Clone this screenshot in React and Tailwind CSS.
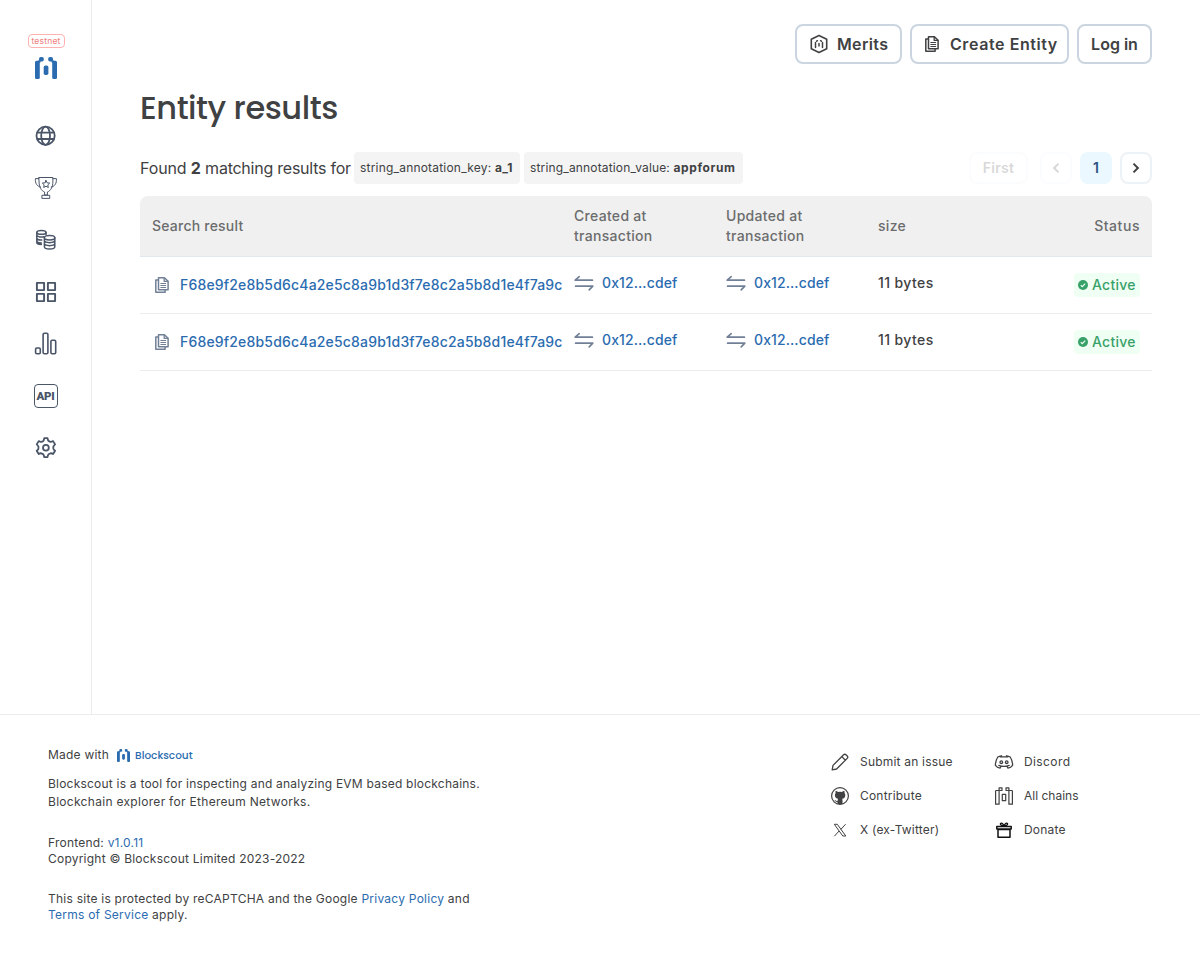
import React from "react";

const svgBase = { fill: "none", stroke: "currentColor", strokeLinecap: "round", strokeLinejoin: "round" };

function Logo({ className }) {
  return (
    <svg viewBox="0 0 22 22" className={className} fill="currentColor">
      <rect x="0" y="3.8" width="4.8" height="18.2" rx="1.5" />
      <rect x="17.2" y="3.8" width="4.8" height="18.2" rx="1.5" />
      <rect x="4" y="0" width="4.8" height="4.6" rx="1.8" />
      <rect x="13.2" y="0" width="4.8" height="4.6" rx="1.8" />
      <rect x="3" y="3.4" width="2.6" height="2" />
      <rect x="16.4" y="3.4" width="2.6" height="2" />
      <rect x="8.7" y="8.4" width="4.7" height="9.6" rx="1.8" />
    </svg>
  );
}

function GlobeIcon() {
  return (
    <svg viewBox="0 0 30 30" className="size-[30px]" {...svgBase} strokeWidth="1.8">
      <circle cx="14.6" cy="14.8" r="9.1" />
      <ellipse cx="14.6" cy="14.8" rx="4.4" ry="9.1" />
      <path d="M6.6 11.6h16M6.6 18h16" />
    </svg>
  );
}

function TrophyIcon() {
  return (
    <svg viewBox="0 0 30 30" className="size-[30px]" {...svgBase} strokeWidth="1">
      <path d="M8 4.500h13.900v3.800c0 6-2.300 9.500-5.500 10.700v3h-2.800v-3c-3.200-1.200-5.600-4.700-5.600-10.700z" />
      <path d="M8 5.600H4.400c-.3 5 1.600 7.700 5.200 8.500M22 5.600h3.400c.3 5-1.600 7.700-5.200 8.500" />
      <path d="M11.300 22.300h7.400v3.100h-7.400z" />
      <path d="m15 7.400 1.100 2.400 2.600.3-1.900 1.800.5 2.600-2.300-1.300-2.300 1.300.5-2.600-1.900-1.800 2.600-.3z" />
    </svg>
  );
}

function CoinsIcon() {
  return (
    <svg viewBox="0 0 30 30" className="size-[30px]" {...svgBase} strokeWidth="1.5">
      <ellipse cx="10.400" cy="7.400" rx="4.600" ry="1.900" />
      <path d="M5.800 7.400v10.200c0 1.200 2.100 1.900 4.500 1.900M15 7.400v2.200M5.800 10.300c.6 1.700 5 2.200 7.200 1.400M5.800 13.400c.6 1.500 2.800 1.800 5 1.700M5.800 16.400c.6 1 2.500 1.600 4.600 1.600" />
      <ellipse cx="18.600" cy="12.700" rx="5.200" ry="2.200" />
      <path d="M13.400 12.700v9c0 3 10.400 3 10.400 0v-9M13.400 15.700c.6 2.600 9.800 2.600 10.400 0M13.400 18.700c.6 2.600 9.800 2.600 10.400 0" />
    </svg>
  );
}

function GridIcon() {
  return (
    <svg viewBox="0 0 30 30" className="size-[30px]" fill="none" stroke="currentColor" strokeWidth="1.9" strokeLinejoin="round">
      <path d="M5.900 5.900h7.200v7.200H5.900zM16.900 5.900h7.200v7.200h-7.200zM5.900 16.900h7.200v7.200H5.900zM16.900 16.900h7.200v7.200h-7.200z" />
    </svg>
  );
}

function StatsIcon() {
  return (
    <svg viewBox="0 0 30 30" className="size-[30px]" {...svgBase} strokeWidth="1.600">
      <rect x="4.600" y="19" width="4.700" height="5.800" rx="1.200" />
      <rect x="12.100" y="4.200" width="4.800" height="20.600" rx="1.200" />
      <rect x="19.900" y="11.200" width="4.800" height="13.600" rx="1.200" />
    </svg>
  );
}

function ApiIcon() {
  return (
    <span className="flex h-6 w-6 items-center justify-center rounded-[4px] border-[1.5px] border-[#4a5568] pt-px font-[Roboto,sans-serif] text-[11.5px] font-black leading-none tracking-[-0.3px]">
      API
    </span>
  );
}

function GearIcon() {
  return (
    <svg viewBox="0 0 30 30" className="size-[30px]" {...svgBase} strokeWidth="1.800">
      <circle cx="14.900" cy="14.700" r="2.900" />
      <path d="M13.300 5.200h3.200q.5 2.300 1.100 2.800t1.900.9q1 .2 2.600-.8l2 3.300q-1.500 1.400-1.700 2.100t0 2.200q.2.900 1.700 2l-2 3.300q-1.600-1-2.600-.7t-1.900 1q-.7.500-1.100 2.900h-3.200q-.5-2.400-1.100-2.900t-1.900-1q-1-.3-2.600.7l-2-3.300q1.500-1.100 1.700-2t0-2.200q-.2-.7-1.700-2.100l2-3.300q1.600 1 2.600.8t1.900-.9q.6-.5 1.100-2.800z" />
    </svg>
  );
}

function DocsIcon({ className }) {
  return (
    <svg viewBox="0 0 16 18" className={className} {...svgBase} strokeWidth="1.500">
      <path d="M4.500 1.700h5.900l3.700 3.600v8.500H4.500z" />
      <path d="M3.800 3.900H1.800v12.400h9.300v-2.200" />
      <path strokeWidth="1.300" d="M10.200 2v3.400h3.600" />
      <path strokeWidth="1" d="M6.800 7.500h4.900M6.800 9.500h4.900M6.800 11.500h4.900" />
    </svg>
  );
}

function MeritsIcon() {
  return (
    <svg viewBox="0 0 20 20" className="size-5 shrink-0" {...svgBase} strokeWidth="1.600">
      <path d="m10 1.500 7.700 3.700v9.600L10 18.500l-7.700-3.700V5.200z" />
      <path strokeWidth="1.500" d="M6.500 8.500v5M8.400 6.700l-.7.500M13.500 8.500v5M11.600 6.700l.7.500M10 9.600v2.400" />
    </svg>
  );
}

function TxIcon() {
  return (
    <svg viewBox="0 0 20 20" className="size-5 shrink-0 text-[#718096]" {...svgBase} strokeWidth="1.700">
      <path d="M18.400 7.200H1.200l4-3.500M1.600 13.200h17.200l-3.600 3.700" />
    </svg>
  );
}

function Chevron({ flip }) {
  return (
    <svg viewBox="0 0 12 12" className="size-3" fill="none" stroke="currentColor" strokeWidth="2">
      <path d={flip ? "M8.500 1.600 4.100 6l4.400 4.400" : "M3.500 1.600 7.900 6l-4.400 4.400"} />
    </svg>
  );
}

function CheckIcon() {
  return (
    <svg viewBox="0 0 10 10" className="size-[10px]">
      <circle cx="5" cy="5" r="5" fill="currentColor" />
      <path d="m2.800 5.200 1.500 1.400 2.900-3" fill="none" stroke="#f0fff4" strokeWidth="1.200" />
    </svg>
  );
}

const foot = { viewBox: "0 0 20 20", className: "size-5 shrink-0" };

const footerIcons = {
  edit: (
    <svg {...foot} {...svgBase} strokeWidth="1.300">
      <path d="M2.200 17.800 3 13.400 13.600 2.800a1.700 1.700 0 0 1 2.400 0l1.200 1.200a1.700 1.700 0 0 1 0 2.400L6.600 17zM11.800 4.600l3.600 3.600" />
    </svg>
  ),
  github: (
    <svg {...foot} fill="none">
      <circle cx="10" cy="10" r="8.400" stroke="currentColor" strokeWidth="1.200" />
      <path fill="currentColor" d="M5.600 5c.9 0 1.800.5 2.400.9a9 9 0 0 1 4 0c.6-.4 1.500-.9 2.400-.9.4 1 .2 1.700.1 2.100.5.600.8 1.300.8 2.100 0 2.500-1.600 3.300-3.200 3.600.3.400.4.800.4 1.400v3.800h-5v-1.900c-1.600.2-2-.8-2.600-1.500l-.8-.6c1-.4 1.700.3 2.200.9.400.4.800.4 1.300.2 0-.9.100-1.600.5-2.300-1.600-.3-3.200-1.100-3.200-3.600 0-.8.300-1.500.8-2.100-.2-.4-.4-1.100-.1-2.100z" />
    </svg>
  ),
  x: (
    <svg {...foot} fill="none" stroke="currentColor" strokeWidth="1">
      <path d="M4.300 4.300h3l8.500 11.700h-3zM15.600 4.200l-4.800 5.200M9.100 11 4.400 16.200" />
    </svg>
  ),
  discord: (
    <svg {...foot} {...svgBase} strokeWidth="1.300">
      <path d="M6.500 4.900C7 4 7.300 3.800 7.600 3.800c-1.600.2-3 .7-3.800 1.200C2.300 7.200 1.400 10.200 1.400 13.400c1.200 1.600 3 2.500 4.600 2.800l1-1.900M13.500 4.900c-.5-.9-.8-1.100-1.100-1.100 1.600.2 3 .7 3.800 1.200 1.500 2.200 2.400 5.200 2.400 8.400-1.200 1.600-3 2.500-4.600 2.800l-1-1.900M6.400 4.900h7.200M4.800 13.400c3 1.200 7.400 1.200 10.400 0" />
      <circle cx="7.300" cy="10.200" r="1.300" />
      <circle cx="12.700" cy="10.200" r="1.300" />
    </svg>
  ),
  chains: (
    <svg {...foot} {...svgBase} strokeWidth="1.200">
      <path d="M1.900 4.500h3.200v13.700H1.600V5.200zM14.900 4.500h3.200l.3.700v13H14.900zM5.100 4.500V1.800h2.900v2.700zM12 1.800h2.900v2.700H12zM8.300 8.300h3.400v6.400H8.300z" />
    </svg>
  ),
  donate: (
    <svg {...foot} {...svgBase} stroke="#101112" strokeWidth="1.500">
      <path d="M2.800 6.500h14.400v2.600H2.800zM4 9.400h12v7.800H4z" />
      <path strokeWidth="1.300" d="M10 6.200C8.500 5.800 6 5.200 6.400 3.700c.8-1.200 2.700-.4 3.600 2.300.9-2.700 2.800-3.500 3.600-2.300.4 1.500-2.100 2.100-3.600 2.500z" />
    </svg>
  ),
};

const navIcons = [GlobeIcon, TrophyIcon, CoinsIcon, GridIcon, StatsIcon, ApiIcon, GearIcon];

const footerColumns = [
  [["edit", "Submit an issue"], ["github", "Contribute"], ["x", "X (ex-Twitter)"]],
  [["discord", "Discord"], ["chains", "All chains"], ["donate", "Donate"]],
];

const labelTracking = { "All chains": "tracking-normal", Discord: "tracking-[0.4px]" };

function Sidebar() {
  return (
    <aside className="flex h-[714px] w-[92px] shrink-0 flex-col items-center border-r border-[#ececec] pt-[34px]">
      <span className="ml-px flex h-[14px] w-[37px] items-center justify-center rounded border border-[#feb2b2] text-[8.5px] leading-none tracking-[0.2px] text-[#f07f7f]">
        testnet
      </span>
      <Logo className="mt-[9px] size-[22px] text-[#2b6cb0]" />
      <nav className="mt-[42px] flex flex-col items-center gap-[22px] text-[#4a5568]">
        {navIcons.map((Icon, i) => (
          <a key={i} className="flex size-[30px] items-center justify-center">
            <Icon />
          </a>
        ))}
      </nav>
    </aside>
  );
}

function TxLink() {
  return (
    <a className="flex items-center gap-2 text-[#2b6cb0]">
      <TxIcon />
      <span className="tracking-[0.1px]">0x12...cdef</span>
    </a>
  );
}

const columns = "grid grid-cols-[428px_152px_152px_140px_140px]";

function Row() {
  return (
    <div className={`${columns} h-[57px] border-b border-[#ececec] text-sm font-medium leading-5`}>
      <div className="flex items-center gap-2 pl-3 pr-1.5 text-[#2b6cb0]">
        <span className="flex size-5 shrink-0 items-center justify-center">
          <DocsIcon className="h-[18px] w-4 text-[#718096]" />
        </span>
        <span className="min-w-0 overflow-hidden whitespace-nowrap tracking-[0.18px]">F68e9f2e8b5d6c4a2e5c8a9b1d3f7e8c2a5b8d1e4f7a9c</span>
      </div>
      <div className="px-1.5 pt-4"><TxLink /></div>
      <div className="px-1.5 pt-4"><TxLink /></div>
      <div className="px-1.5 pt-4 tracking-[0.4px]">11 bytes</div>
      <div className="flex items-center justify-end pr-3">
        <span className="flex h-6 w-[66px] items-center gap-1 rounded-sm bg-[#f0fff4] px-1 tracking-[0.25px] text-[#38a169]">
          <CheckIcon />
          Active
        </span>
      </div>
    </div>
  );
}

export default function App() {
  return (
    <div className="flex h-[955px] w-[1200px] flex-col overflow-hidden bg-white font-[Inter,sans-serif] text-[#404142]">
      <div className="flex">
        <Sidebar />
        <main className="w-[1108px] px-12 pt-6">
          <div className="flex justify-end gap-2 text-base font-semibold">
            <button className="flex h-10 w-[107px] items-center gap-2 whitespace-nowrap rounded-lg border-2 border-[#cbd5e0] pl-3 tracking-[0.35px]">
              <MeritsIcon />
              Merits
            </button>
            <button className="flex h-10 w-[159px] items-center gap-2 whitespace-nowrap rounded-lg border-2 border-[#cbd5e0] pl-[10px] tracking-[0.58px]">
              <span className="flex size-5 shrink-0 items-center justify-center"><DocsIcon className="h-[18px] w-4" /></span>
              Create Entity
            </button>
            <button className="flex h-10 w-[75px] items-center justify-center whitespace-nowrap rounded-lg border-2 border-[#cbd5e0]">Log in</button>
          </div>

          <h1 className="mt-6 h-10 whitespace-nowrap font-[Poppins,Inter,sans-serif] text-[32px] font-medium leading-10 tracking-[-0.45px]">Entity results</h1>

          <div className="mt-6 flex h-8 items-center justify-between">
            <div className="flex items-center gap-1">
              <p className="w-[210px] whitespace-nowrap tracking-[-0.14px]">
                Found <b className="font-bold">2</b> <span className="tracking-[-0.24px]">matching results for</span>
              </p>
              <span className="flex h-8 w-[166px] items-center whitespace-pre rounded bg-[#f4f4f4] px-1.5 text-xs tracking-[0.2px]">
                string_annotation_key: <b className="font-bold tracking-[0.5px]">a_1</b>
              </span>
              <span className="flex h-8 w-[219px] items-center whitespace-pre rounded bg-[#f4f4f4] px-1.5 text-xs tracking-[0.16px]">
                string_annotation_value: <b className="font-bold tracking-[0.6px]">appforum</b>
              </span>
            </div>
            <div className="flex items-center gap-2 text-sm font-semibold">
              <button className="mr-1 flex h-8 w-[59px] items-center justify-center rounded-lg border-2 border-[#edf2f7] tracking-[0.25px] opacity-20">First</button>
              <button className="flex size-8 items-center justify-center rounded-lg border-2 border-[#edf2f7] opacity-20"><Chevron flip /></button>
              <button className="flex size-8 items-center justify-center rounded-lg bg-[#ebf8ff] text-[#2c5282]">1</button>
              <button className="flex size-8 items-center justify-center rounded-lg border-2 border-[#edf2f7]"><Chevron /></button>
            </div>
          </div>

          <section className="mt-3">
            <div className={`${columns} h-[61px] items-center rounded-t-lg border-b border-[#e2e8f0] bg-[#f0f0f0] text-sm font-medium leading-5 tracking-[0.3px] text-[#6b6c6d]`}>
              <div className="pl-3 tracking-[0.22px]">Search result</div>
              <div className="px-1.5">Created at transaction</div>
              <div className="px-1.5">Updated at transaction</div>
              <div className="px-1.5">size</div>
              <div className="pr-3 text-right tracking-[0.55px]">Status</div>
            </div>
            <Row />
            <Row />
          </section>
        </main>
      </div>

      <footer className="flex grow justify-between border-t border-[#ececec] pl-12 pt-8 text-xs tracking-[0.22px]">
        <div className="w-[440px]">
          <div className="flex h-4 items-center">
            Made with
            <Logo className="ml-2 size-[13px] text-[#2b6cb0]" />
            <span className="ml-[5px] pt-px font-[Poppins,Inter,sans-serif] text-[10.5px] font-medium tracking-[0px] text-[#2b6cb0]">Blockscout</span>
          </div>
          <p className="mt-3 leading-[18px]">
            Blockscout is a tool for inspecting and analyzing EVM based blockchains.
            <br />
            <span className="tracking-[0.3px]">Blockchain explorer for Ethereum Networks.</span>
          </p>
          <p className="mt-6 leading-4">
            Frontend: <a className="text-[#2b6cb0]">v1.0.11</a>
            <br />
            Copyright © Blockscout Limited 2023-2022
          </p>
          <p className="mt-6 leading-4 tracking-[0.24px]">
            This site is protected by reCAPTCHA and the Google <a className="text-[#2b6cb0]">Privacy Policy</a> and
            <br />
            <a className="text-[#2b6cb0]">Terms of Service</a> apply.
          </p>
        </div>
        <div className="flex w-[370px] gap-1 pt-[5px]">
          {footerColumns.map((col, i) => (
            <div key={i} className="flex w-40 flex-col gap-[14px]">
              {col.map(([icon, label]) => (
                <a key={label} className="flex h-5 items-center gap-[10px]">
                  {footerIcons[icon]}
                  <span className={labelTracking[label] || "tracking-[0.2px]"}>{label}</span>
                </a>
              ))}
            </div>
          ))}
        </div>
      </footer>
    </div>
  );
}
